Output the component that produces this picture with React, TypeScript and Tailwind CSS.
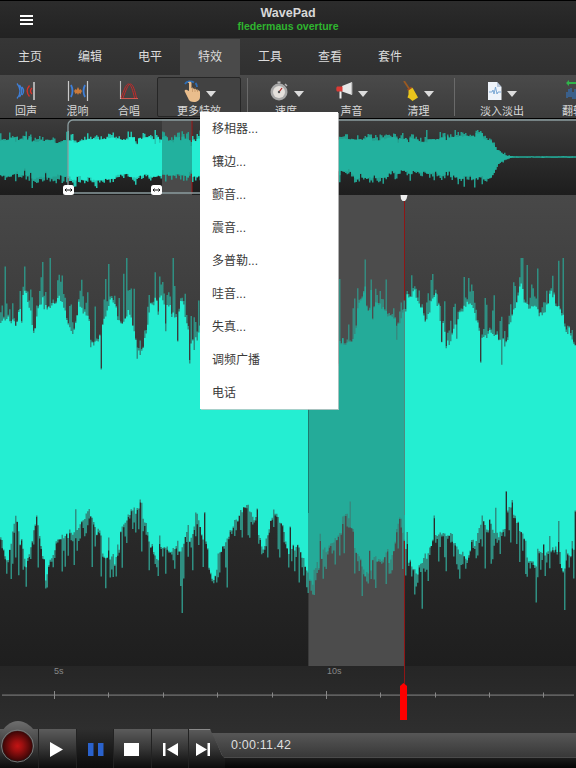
import { useMemo } from "react";

const TABS = ["主页", "编辑", "电平", "特效", "工具", "查看", "套件"];

const MENU = ["移相器...", "镶边...", "颤音...", "震音...", "多普勒...", "哇音...", "失真...", "调频广播", "电话"];

// control points read off the big waveform: [x, page y]
const TOP_ENV = [
  [0, 327], [8, 317], [15, 333], [24, 297], [33, 330], [45, 300], [60, 300], [72, 347], [78, 307], [90, 337],
  [100, 333], [110, 303], [122, 323], [128, 307], [140, 350], [150, 307], [160, 300], [172, 307], [182, 303],
  [193, 353], [200, 327], [270, 320], [338, 337], [352, 333], [365, 297], [380, 307], [395, 327], [404, 308],
  [415, 303], [425, 323], [435, 300], [448, 350], [460, 307], [470, 303], [480, 337], [490, 323], [500, 343],
  [510, 327], [520, 293], [535, 307], [550, 300], [565, 323], [576, 353],
];
const BOTTOM_ENV = [
  [0, 530], [7, 567], [16, 510], [25, 577], [36, 513], [45, 567], [58, 540], [75, 543], [90, 513], [108, 570],
  [125, 533], [140, 503], [155, 553], [165, 550], [180, 563], [195, 510], [212, 577], [230, 540], [245, 510],
  [262, 557], [275, 510], [288, 550], [298, 550], [312, 583], [325, 540], [345, 517], [365, 567], [385, 560],
  [400, 517], [410, 567], [420, 577], [435, 543], [450, 543], [465, 567], [480, 513], [495, 543], [510, 517],
  [525, 550], [540, 557], [555, 550], [570, 567], [576, 510],
];
const MINI_TOP = [
  [0, 140], [20, 137], [40, 141], [68, 142], [90, 138], [120, 139], [150, 138], [200, 139], [338, 141], [360, 139],
  [395, 138], [420, 141], [450, 137], [480, 135], [490, 139], [497, 150], [505, 155], [512, 156.500], [576, 156.500],
];
const MINI_BOTTOM = [
  [0, 174], [30, 177], [68, 177], [100, 179], [130, 175], [160, 176], [200, 175], [338, 173], [372, 179], [400, 171],
  [440, 176], [470, 178], [490, 177], [497, 163], [505, 159], [512, 157.500], [576, 157.500],
];

function rng(seed: number) {
  let a = seed;
  return () => {
    a = (a + 0x6d2b79f5) | 0;
    let t = Math.imul(a ^ (a >>> 15), 1 | a);
    t = (t + Math.imul(t ^ (t >>> 7), 61 | t)) ^ t;
    return ((t ^ (t >>> 14)) >>> 0) / 4294967296;
  };
}

function lerp(pts: number[][], x: number) {
  for (let i = 1; i < pts.length; i++) {
    if (x <= pts[i][0]) {
      const [x0, y0] = pts[i - 1];
      const [x1, y1] = pts[i];
      return y0 + ((y1 - y0) * (x - x0)) / (x1 - x0);
    }
  }
  return pts[pts.length - 1][1];
}

type WaveOpts = { offset: number; center: number; amp: number; seed: number; min: number; max: number };

function buildWave(top: number[][], bottom: number[][], o: WaveOpts) {
  const r = rng(o.seed);
  const { amp, center } = o;
  let core = "";
  let spikes = "";
  let midT = 0;
  let midB = 0;
  let holdT = 0;
  let holdB = 0;
  const side = (env: number, mid: number, sign: number) => {
    // sign -1 = upward side, +1 = downward side
    const scale = Math.min(1, Math.abs(env - center) / (amp * 2));
    let c = env + (mid + (r() - 0.5) * amp * 0.25) * scale;
    if (r() < 0.08) c -= sign * r() * amp * 1.3 * scale;
    let s = c + sign * (r() < 0.45 ? r() * r() * amp * 1.6 + amp * 0.3 : r() * amp * 0.15) * scale;
    if (r() < 0.08) s += sign * r() * amp * 1.8 * scale;
    return [c, Math.max(o.min, Math.min(o.max, s))];
  };
  for (let x = 0; x < 576; x += 1.5) {
    if (holdT-- <= 0) {
      midT = (r() - 0.5) * amp;
      holdT = 2 + Math.floor(r() * 4);
    }
    if (holdB-- <= 0) {
      midB = (r() - 0.5) * amp;
      holdB = 2 + Math.floor(r() * 4);
    }
    const [t, ts] = side(lerp(top, x), midT, -1);
    const [b, bs] = side(lerp(bottom, x), midB, 1);
    core += `M${x + 0.75} ${(t - o.offset).toFixed(1)}V${(b - o.offset).toFixed(1)}`;
    spikes += `M${x + 0.75} ${(ts - o.offset).toFixed(1)}V${(bs - o.offset).toFixed(1)}`;
  }
  return { core, spikes };
}

function MainWave() {
  const w = useMemo(
    () => buildWave(TOP_ENV, BOTTOM_ENV, { offset: 195, center: 430, amp: 24, seed: 77, min: 258, max: 613 }),
    []
  );
  return (
    <svg width="576" height="471" viewBox="0 0 576 471" className="block">
      <defs>
        <clipPath id="sel">
          <rect x="308" y="0" width="97" height="471" />
        </clipPath>
        <clipPath id="unsel">
          <rect x="0" y="0" width="308" height="471" />
          <rect x="405" y="0" width="171" height="471" />
        </clipPath>
      </defs>
      <rect x="308" y="0" width="96" height="471" fill="#4c4c4c" />
      <rect x="308" y="0" width="1" height="471" fill="#3a3a3a" />
      <rect x="404" y="3" width="1" height="468" fill="#8e1616" />
      <g clipPath="url(#unsel)" fill="none" strokeWidth="1.500">
        <path d={w.spikes} stroke="#2f8f82" />
        <path d={w.core} stroke="#24eed2" />
      </g>
      <g clipPath="url(#sel)" fill="none" strokeWidth="1.500">
        <path d={w.spikes} stroke="#358a7f" />
        <path d={w.core} stroke="#24ab99" />
      </g>
      <rect x="404" y="115" width="1" height="205" fill="#4f8a80" />
      <rect x="308" y="213" width="1" height="105" fill="#1d7a6e" />
      <path d="M400.500 0h7l-1 4-1.500 2h-2.500l-1.500-2z" fill="#eeeeee" />
    </svg>
  );
}

function MiniWave() {
  const w = useMemo(
    () => buildWave(MINI_TOP, MINI_BOTTOM, { offset: 119, center: 157, amp: 5, seed: 31, min: 130, max: 188 }),
    []
  );
  return (
    <svg width="576" height="76" viewBox="0 0 576 76" className="block">
      <defs>
        <clipPath id="miniBright">
          <rect x="68" y="0" width="94" height="76" />
          <rect x="192" y="0" width="10" height="76" />
        </clipPath>
        <clipPath id="miniDark">
          <rect x="0" y="0" width="68" height="76" />
          <rect x="162" y="0" width="30" height="76" />
          <rect x="202" y="0" width="374" height="76" />
        </clipPath>
      </defs>
      <rect x="162" y="0" width="30" height="76" fill="#4a4a4a" />
      <rect x="191.500" y="0" width="1" height="75" fill="#9c1414" />
      <g clipPath="url(#miniDark)" fill="none" strokeWidth="1.500">
        <path d={w.spikes} stroke="#23a08f" />
        <path d={w.core} stroke="#22b19e" />
      </g>
      <g clipPath="url(#miniBright)" fill="none" strokeWidth="1.500">
        <path d={w.spikes} stroke="#24c9b3" />
        <path d={w.core} stroke="#24eed2" />
      </g>
      <path d="M68 74V6a5 5 0 0 1 5-5H576M68 74H210" fill="none" stroke="#8b9c9f" strokeWidth="1.300" />
      <rect x="63" y="66" width="11" height="10" rx="2.500" fill="#fff" />
      <rect x="151" y="66" width="11" height="10" rx="2.500" fill="#fff" />
      <path d="M65 71h7M66.500 69.500L65 71l1.500 1.500M70.500 69.500L72 71l-1.500 1.500" stroke="#111" fill="none" />
      <path d="M153 71h7M154.500 69.500L153 71l1.500 1.500M158.500 69.500L160 71l-1.500 1.500" stroke="#111" fill="none" />
    </svg>
  );
}

function Ruler() {
  const major = [54, 326];
  const minor = [108, 163, 217, 272, 380, 435, 489, 543];
  return (
    <svg width="576" height="63" viewBox="0 0 576 63" className="block">
      <rect x="2" y="28.500" width="572" height="1.200" fill="#777" />
      {major.map((x) => (
        <rect key={x} x={x} y="25" width="1" height="8" fill="#888" />
      ))}
      {minor.map((x) => (
        <rect key={x} x={x} y="26.500" width="1" height="5" fill="#888" />
      ))}
      <path d="M400 54V20l3.500-3 3.500 3V54z" fill="#ff0000" />
      <rect x="404" y="0" width="1" height="18" fill="#8e1616" />
    </svg>
  );
}

function EchoIcon() {
  return (
    <svg width="22" height="20" viewBox="0 0 22 20" fill="none">
      <path d="M19 1v18" stroke="#c9c9c9" strokeWidth="1.600" />
      <path d="M7 6c2 2.500 2 5.500 0 8M4.500 4c3 3.500 3 8.500 0 12M2 2.500c4 4.500 4 10.500 0 15" stroke="#3f7fd8" strokeWidth="1.300" />
      <path d="M17 7c-2 2-2 4 0 6M14.500 4.500c-3 3.500-3 7.500 0 11" stroke="#d8332b" strokeWidth="1.300" />
    </svg>
  );
}

function ReverbIcon() {
  return (
    <svg width="22" height="20" viewBox="0 0 22 20" fill="none">
      <path d="M1.500 0v20M20.500 0v20" stroke="#c9c9c9" strokeWidth="1.200" />
      <path d="M4 4c2 4 2 8 0 12M18 4c-2 4-2 8 0 12" stroke="#3f7fd8" strokeWidth="1.800" />
      <path d="M7 10l1.500-2 1 1L11 6l1.500 3 1-1L15 10l-1.500 3-1.500-1-1 2-1-2-1.500 1z" fill="#c9793a" />
    </svg>
  );
}

function ChorusIcon() {
  return (
    <svg width="20" height="20" viewBox="0 0 20 20" fill="none">
      <path d="M1.500 0v17.500H19" stroke="#bdbdbd" strokeWidth="1.100" />
      <path d="M2 17C5 9 7 3 9.500 3S14 10 15.500 17" stroke="#c42a2a" strokeWidth="1" />
      <path d="M4 17C7 9 9 3 11.500 3S16 10 17.500 17" stroke="#c42a2a" strokeWidth="1" />
      <path d="M2 17.500h17" stroke="#d0574f" strokeWidth="1" />
    </svg>
  );
}

function HandIcon() {
  return (
    <svg width="18" height="23" viewBox="0 0 18 23" fill="none">
      <path d="M2 4c1.500-3 6-3.500 9-1.500M14 7c0-1.500-.5-3-1.500-4" stroke="#2f6fb8" strokeWidth="1.800" />
      <path d="M6 3v8L4 10c-2-1-3 .5-2 2l3 6c1 3 3 4 6 4s6-1.500 6-5v-5c0-1.500-2-2-3-1.500 0-1.500-2-2-3-1.200 0-1-1.500-1.800-2.500-1V3c0-1.800-3.500-1.800-3.500 0z" fill="#e9bd8c" />
      <path d="M9.500 7v5M12 7.500V12M14.500 9v3" stroke="#b98a5c" strokeWidth=".6" />
    </svg>
  );
}

function WatchIcon() {
  return (
    <svg width="20" height="20" viewBox="0 0 20 20" fill="none">
      <circle cx="10" cy="11" r="8.500" fill="#a8a8a8" />
      <circle cx="10" cy="11" r="6" fill="#e4e0dc" />
      <path d="M10 11l3-4" stroke="#b02020" strokeWidth="1.200" />
      <circle cx="10" cy="11" r="1.200" fill="#555" />
      <rect x="8.500" y="0.500" width="3" height="2" fill="#bbb" />
      <path d="M16 3l2 2" stroke="#bbb" strokeWidth="1.500" />
    </svg>
  );
}

function HornIcon() {
  return (
    <svg width="17" height="18" viewBox="0 0 17 18" fill="none">
      <path d="M16 0v13L6 9.500V4z" fill="#e8e8e8" />
      <path d="M1 4.500h5.500v5H1c-1-1-1-4 0-5z" fill="#dc3a34" />
      <path d="M3.500 9.500h2v7h-2z" fill="#efefef" />
      <path d="M15.500 0.500h1v12h-1z" fill="#9a9a9a" />
    </svg>
  );
}

function BroomIcon() {
  return (
    <svg width="16" height="20" viewBox="0 0 16 20" fill="none">
      <path d="M1 0l6 9" stroke="#9a5a22" strokeWidth="1.800" />
      <path d="M5.500 8.500L9 6.500l1 1 5 9-5.500 3.500-3-2.500-2-1 1-3z" fill="#e8c41c" />
      <path d="M4.500 9l4-2.500" stroke="#a04a20" strokeWidth="1.500" />
    </svg>
  );
}

function DocIcon() {
  return (
    <svg width="15" height="18" viewBox="0 0 15 18" fill="none">
      <path d="M1 0h9l4.500 5v13H1z" fill="#eef3fa" />
      <path d="M10 0v5h4.500z" fill="#b9c8dc" />
      <path d="M2 10h3l1-2 1 4 1.500-7L10 12l1-2h3" stroke="#6fa0d0" strokeWidth=".9" />
    </svg>
  );
}

function FlipIcon() {
  return (
    <svg width="20" height="22" viewBox="0 0 20 22" fill="none">
      <path d="M3 3l3-3v2h9v2H6v2z" fill="#2fb54a" />
      <path d="M1 16h2v-4h2v-3h2v-1h2v4h2v-3h2v4h2v5h-2v1H9v-2H5v1H3v-2H1z" fill="#3a5f8a" />
    </svg>
  );
}

function Caret() {
  return <span className="inline-block w-0 h-0 border-x-[5.500px] border-x-transparent border-t-[6px] border-t-[#dcdcdc]" />;
}

function ToolItem({ icon, label, caret, className }: { icon: React.ReactNode; label: string; caret?: boolean; className: string }) {
  return (
    <div className={`flex flex-col items-center shrink-0 ${className}`}>
      <div className="h-[24px] flex items-center gap-[5px]">
        {icon}
        {caret && (
          <span className="mt-[6px] flex">
            <Caret />
          </span>
        )}
      </div>
      <span className="mt-px text-[11px] leading-[14px] text-[#d8d8d8] whitespace-nowrap">{label}</span>
    </div>
  );
}

function Separator() {
  return <div className="w-px h-[38px] bg-[#6a6a6a] shrink-0" />;
}

function TransportBtn({ children, active }: { children: React.ReactNode; active?: boolean }) {
  return (
    <div
      className={`w-[37.500px] shrink-0 border-l border-[#222] ${
        active ? "bg-gradient-to-b from-[#2e2e2e] to-[#0c0c0c]" : "bg-gradient-to-b from-[#5c5c5c] via-[#363636] to-[#0c0c0c]"
      }`}
    >
      <svg width="37" height="39" viewBox="0 0 37 39" className="block">
        {children}
      </svg>
    </div>
  );
}

export default function App() {
  return (
    <div className="relative w-[576px] h-[768px] overflow-hidden flex flex-col bg-[#222] font-['Liberation_Sans','Noto_Sans_CJK_SC',sans-serif]">
      {/* title bar */}
      <header className="relative h-[38px] shrink-0 border-t border-black bg-gradient-to-b from-[#2c2c2c] to-[#222] flex flex-col items-center pt-[6px]">
        <div className="absolute left-[20px] top-[14px] w-[13px] flex flex-col gap-[2px]">
          <span className="h-[2px] bg-white" />
          <span className="h-[2px] bg-white" />
          <span className="h-[2px] bg-white" />
        </div>
        <span className="text-[12.500px] leading-[13px] font-bold text-[#d8d8d8]">WavePad</span>
        <span className="text-[10.500px] leading-[12px] font-bold text-[#2fb52f]">fledermaus overture</span>
      </header>

      {/* tabs */}
      <nav className="h-[37px] shrink-0 flex bg-gradient-to-b from-[#363636] to-[#303030]">
        {TABS.map((t) => (
          <div
            key={t}
            className={`w-[60px] flex items-center justify-center text-[12px] text-[#dcdcdc] ${
              t === "特效" ? "bg-[#4a4a4a] mt-px" : ""
            }`}
          >
            {t}
          </div>
        ))}
      </nav>

      {/* toolbar */}
      <div className="relative h-[44px] shrink-0 flex items-start overflow-hidden border-b border-black bg-gradient-to-b from-[#4a4a4a] to-[#3c3c3c]">
        <ToolItem icon={<EchoIcon />} label="回声" className="w-[52px] pt-[4px]" />
        <ToolItem icon={<ReverbIcon />} label="混响" className="w-[51px] pt-[4px]" />
        <ToolItem icon={<ChorusIcon />} label="合唱" className="w-[52px] pt-[4px]" />
        <div className="ml-[2px] w-[84px] h-[40px] mt-[2px] rounded-[2px] border border-[#262626] bg-[#424242] shrink-0">
          <ToolItem icon={<HandIcon />} label="更多特效" caret className="w-full pt-px" />
        </div>
        <div className="ml-[6px] mt-[3px] flex">
          <Separator />
        </div>
        <ToolItem icon={<WatchIcon />} label="速度" caret className="w-[64px] ml-[6px] pt-[4px]" />
        <ToolItem icon={<HornIcon />} label="声音" caret className="w-[67px] pt-[4px]" />
        <ToolItem icon={<BroomIcon />} label="清理" caret className="w-[67px] pt-[4px]" />
        <div className="ml-[2px] mt-[3px] flex">
          <Separator />
        </div>
        <ToolItem icon={<DocIcon />} label="淡入淡出" caret className="w-[92px] ml-px pt-[4px]" />
        <ToolItem icon={<FlipIcon />} label="翻转" className="w-[50px] pt-[4px]" />
      </div>

      {/* overview */}
      <div className="h-[76px] shrink-0 bg-gradient-to-b from-[#3c3c3c] to-[#1d1d1d]">
        <MiniWave />
      </div>

      {/* main waveform */}
      <div className="h-[471px] shrink-0 bg-gradient-to-b from-[#484848] to-[#1e1e1e]">
        <MainWave />
      </div>

      {/* ruler */}
      <div className="relative h-[63px] shrink-0 bg-gradient-to-b from-[#262626] to-[#2e2e2e]">
        <span className="absolute left-[54px] top-0 text-[9px] leading-[11px] text-[#888]">5s</span>
        <span className="absolute left-[327px] top-0 text-[9px] leading-[11px] text-[#888]">10s</span>
        <Ruler />
      </div>

      {/* transport */}
      <div className="relative h-[39px] shrink-0 flex bg-[#2e2e2e]">
        <div className="relative w-[38px] shrink-0 bg-gradient-to-b from-[#5c5c5c] via-[#363636] to-[#0c0c0c]">
          <svg width="38" height="47" viewBox="0 0 38 47" className="absolute left-0 bottom-0">
            <defs>
              <radialGradient id="rec" cx="50%" cy="50%" r="50%">
                <stop offset="0%" stopColor="#c41414" />
                <stop offset="35%" stopColor="#9c1010" />
                <stop offset="100%" stopColor="#3a0606" />
              </radialGradient>
              <linearGradient id="dome" x1="0" y1="0" x2="0" y2="1">
                <stop offset="0%" stopColor="#6e6e6e" />
                <stop offset="60%" stopColor="#363636" />
                <stop offset="100%" stopColor="#0c0c0c" />
              </linearGradient>
            </defs>
            <path d="M0 47V16C3 5 11 0 18 0s15 5 20 16V47z" fill="url(#dome)" />
            <circle cx="17.500" cy="25" r="16" fill="none" stroke="#777" strokeWidth="1" />
            <circle cx="17.500" cy="25" r="15" fill="url(#rec)" />
          </svg>
        </div>
        <TransportBtn>
          <path d="M11 13l13 7.500-13 7.500z" fill="#fff" />
        </TransportBtn>
        <TransportBtn active>
          <path d="M11 14h5.500v13H11zM21 14h5.500v13H21z" fill="#2a62cc" />
        </TransportBtn>
        <TransportBtn>
          <path d="M10 14h15v13H10z" fill="#fff" />
        </TransportBtn>
        <TransportBtn>
          <path d="M11 14h2.500v13H11zM26 14v13l-11-6.500z" fill="#fff" />
        </TransportBtn>
        <div className="relative z-10 w-[37px] shrink-0 border-l border-[#222] bg-gradient-to-b from-[#5c5c5c] via-[#363636] to-[#0c0c0c] [clip-path:polygon(0_0,22px_0,35px_28px,37px_29px,37px_100%,0_100%)]">
          <svg width="37" height="39" viewBox="0 0 37 39" className="block">
            <path d="M7 14l11 6.500L7 27zM18.500 14H21v13h-2.500z" fill="#fff" />
            <path d="M0 .5h21c1.500 0 2 1 3 3L33 25c.7 2 2 3 4 3.500" fill="none" stroke="#8a8a8a" />
          </svg>
        </div>
        <div className="flex-1 -ml-[25px] pt-[4px] flex flex-col bg-[#2e2e2e]">
          <div className="h-[24px] pl-[31px] flex items-center bg-gradient-to-b from-[#575757] to-[#383838] text-[12.500px] tracking-[0.2px] text-[#dedede]">
            0:00:11.42
          </div>
          <div className="flex-1 border-t border-[#4a4a4a] bg-gradient-to-b from-[#1c1c1c] to-[#050505]" />
        </div>
      </div>

      {/* effects dropdown */}
      <div className="absolute left-[200px] top-[112px] w-[138px] flex flex-col bg-white shadow-[1px_1px_0_rgba(200,200,200,0.8)]">
        {MENU.map((m) => (
          <div key={m} className="h-[33px] flex items-center pl-[12px] text-[12px] text-[#3a3a3a]">
            {m}
          </div>
        ))}
      </div>
    </div>
  );
}
